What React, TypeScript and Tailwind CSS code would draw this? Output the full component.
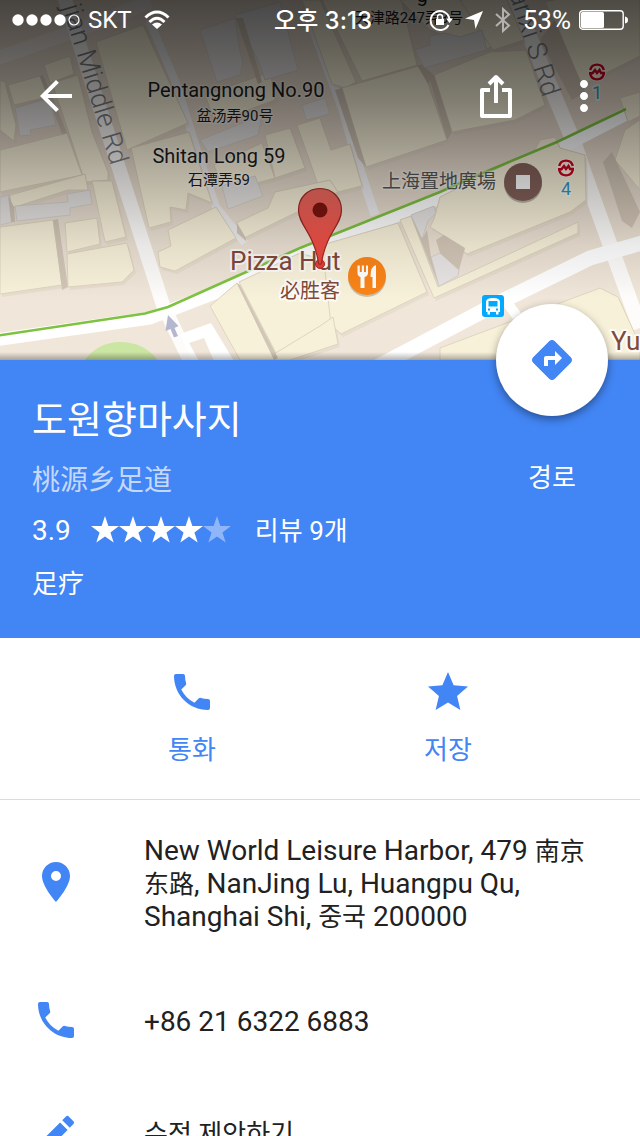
import { MdArrowBack, MdDirections, MdEdit, MdMoreVert, MdPhone, MdPlace, MdStar } from "react-icons/md";

const cream = [
  "0,80 5,82 16,125 14,141 0,130",
  "8,85 40,76 48,97 14,105",
  "44,65 70,56 74,74 50,83",
  "52,83 78,75 92,132 108,172 108,180 85,182 68,130",
  "0,150 67,133 82,175 0,192",
  "96,42 143,25 188,123 127,150",
  "205,95 270,72 275,100 215,122",
  "214,165 262,143 275,178 224,192",
  "265,135 290,128 305,168 275,178",
  "297,125 320,118 331,150 350,144 362,186 322,196",
  "302,0 320,0 356,82 345,88 332,84",
  "322,0 400,-5 417,65 362,81",
  "342,88 422,65 447,140 366,167",
  "434,75 490,52 526,50 545,105 515,120 452,132",
  "400,0 480,-5 492,46 485,50 430,30",
  "460,0 505,-5 524,40 493,50",
  "545,2 640,-20 640,56 582,85",
  "640,92 620,98 628,122 640,116",
  "640,120 625,130 615,160 640,190",
  "0,227 53,220 62,285 0,294",
  "65,223 97,218 100,244 67,252",
  "67,254 127,243 134,270 122,282 68,287",
  "92,181 112,181 126,237 105,242",
  "0,198 85,174 88,190 68,190 15,207 0,205",
  "131,148 189,132 212,203 188,193 186,210 170,207 171,222 149,228",
  "168,230 216,207 236,238 175,271 160,267 158,252 171,246",
  "210,306 237,283 275,360 240,360",
  "239,282 300,253 330,262 332,322 276,353",
  "236,223 268,208 275,192 330,180 338,192 244,238",
  "322,245 398,223 427,292 341,334 331,325",
  "400,220 411,216 438,287 578,222 578,233 434,298",
  "434,219 440,197 535,150 540,140 555,137 560,148 585,155 586,200 570,212 467,254 443,235 430,227",
  "440,348 600,288 618,297 640,345 640,360 440,360",
  "320,326 333,317 338,344 290,360 275,360 274,354",
];
const grey = [
  "15,108 50,98 56,125 30,130 31,135 20,136",
  "200,30 235,18 239,47 243,62 240,75 217,82",
  "235,15 280,2 298,70 265,80 258,60",
  "200,140 262,115 258,135 208,152",
  "415,50 430,45 430,36 445,33 460,37 482,30 487,50 424,68",
  "0,197 10,195 12,222 0,225",
  "15,206 68,202 67,194 90,190 92,204 70,208 70,215 17,221",
  "222,186 255,176 263,196 228,209",
  "302,105 325,98 330,114 306,120",
  "411,215 434,206 436,213 428,221 422,239",
  "431,257 440,253 459,270 458,276 439,286",
];
const shade = [
  "40,76 43,75 52,96 67,133 62,134 48,97",
  "342,88 335,90 358,158 366,167",
  "417,65 422,65 434,75 428,84",
  "447,140 452,132 434,75 430,80",
  "53,220 58,219 68,287 62,290",
  "8,195 14,207 15,222 11,222",
  "237,223 246,238 246,241 237,233",
  "237,283 240,285 278,358 274,360",
  "444,235 465,248 459,270 440,253 436,240",
  "411,216 422,239 427,230 431,257 439,286",
  "540,40 555,20 585,92 572,100",
  "603,162 612,152 640,212 632,228 622,221",
  "236,18 243,18 262,82 258,84",
];

const line = "M-5 336 L145 313.500 L168 307 L235 277 L300 248 L440 192 L490 170 L557 142 L626 109";

function Metro({ x, y, n }: { x: number; y: number; n: string }) {
  return (
    <g transform={`translate(${x} ${y})`}>
      <circle r="9.500" fill="#fff" opacity=".5" />
      <g fill="none" stroke="#d0021b" strokeWidth="2.400">
        <path d="M-6.800 -2A7 7 0 0 1 6.800 -2" />
        <path d="M-6.800 2A7 7 0 0 0 6.800 2V1H4L2.500 -2L0 1L-2 -2L-4.500 1.200H-8" />
      </g>
      <text y="27" textAnchor="middle" fontSize="18" fill="#2f9ac4" stroke="#fff" strokeOpacity=".5" strokeWidth="3" paintOrder="stroke">{n}</text>
    </g>
  );
}

function MapView() {
  return (
    <svg viewBox="0 0 640 360" preserveAspectRatio="xMidYMid slice" className="absolute inset-0 size-full font-['Roboto','Noto_Sans_CJK_SC',sans-serif]" role="img" aria-label="지도">
      <defs>
        <linearGradient id="scrim" x1="0" y1="0" x2="0" y2="1">
          <stop offset="0" stopColor="#000" stopOpacity=".69" />
          <stop offset=".14" stopColor="#000" stopOpacity=".59" />
          <stop offset=".28" stopColor="#000" stopOpacity=".48" />
          <stop offset=".5" stopColor="#000" stopOpacity=".25" />
          <stop offset=".68" stopColor="#000" stopOpacity=".08" />
          <stop offset=".83" stopColor="#000" stopOpacity="0" />
        </linearGradient>
        <linearGradient id="ground" x1="0" y1="0" x2="0" y2="1">
          <stop offset=".4" stopColor="#e6d9cb" />
          <stop offset=".85" stopColor="#f0e7da" />
        </linearGradient>
        <linearGradient id="edge" x1="0" y1="0" x2="0" y2="1">
          <stop offset="0" stopColor="#000" stopOpacity="0" />
          <stop offset="1" stopColor="#000" stopOpacity=".3" />
        </linearGradient>
        <linearGradient id="pin" x1="0" y1="0" x2="0" y2="1">
          <stop offset="0" stopColor="#ee6b62" />
          <stop offset="1" stopColor="#ee4339" />
        </linearGradient>
      </defs>
      <rect width="640" height="360" fill="url(#ground)" />
      <path d="M84 361Q98 342 120 342Q145 342 158 361Z" fill="#cbe6a3" />
      <g fill="none" stroke="#f0f0f4" strokeLinejoin="round">
        <path d="M-5 59L75 31L150 2" strokeWidth="14" opacity=".5" />
        <path d="M149 20L176 83L196 147L216 207L245 243" strokeWidth="8" opacity=".8" />
        <path d="M306 10L343 110L359 167L375 215" strokeWidth="9" opacity=".85" />
      </g>
      <g fill="none" stroke="#fff" strokeLinejoin="round">
        <path d="M62 -10L118 165L163 305L192 365" strokeWidth="14" opacity=".85" />
        <path d="M510 -10L575 145L585 175L640 328" strokeWidth="15" opacity=".85" />
        <path d="M-5 340L150 318L238 284L310 251L440 198L560 148L630 112" strokeWidth="13" />
        <path d="M375 368L500 302L590 258L645 242" strokeWidth="15" />
        <path d="M505 300L517 316" strokeWidth="10" />
      </g>
      <path d="M180 334L211 323L234 361H192ZM189 343L199 361H214L204 338Z" fill="#fff" fillRule="evenodd" />
      <g fill="#dccfbf">
        {cream.map((p) => <polygon key={p} points={p} transform="translate(2 3)" opacity=".4" />)}
      </g>
      <g fill="#f8f1da" stroke="#dfd5bf" strokeWidth="1">
        {cream.map((p) => <polygon key={p} points={p} />)}
      </g>
      <g fill="#e7e4e3" stroke="#d8d2cd" strokeWidth="1">
        {grey.map((p) => <polygon key={p} points={p} />)}
      </g>
      <g fill="#d2c6b6">
        {shade.map((p) => <polygon key={p} points={p} />)}
      </g>
      <path d={line} fill="none" stroke="#7fc241" strokeWidth="2.500" />
      <path d="M168 315L178.500 326L174.500 328L178 336L174 337.500L170.500 329L165.500 331Z" fill="#b4b8cf" />

      <g fill="#7b7e86" fontSize="27" fontWeight="300">
        <text transform="translate(111 166) rotate(73)" textAnchor="end">jian Middle Rd</text>
        <text transform="translate(543 98) rotate(72)" textAnchor="end">anxi S Rd</text>
      </g>
      <g fill="#1c1c1c" stroke="#fff" strokeOpacity=".35" strokeWidth="3" paintOrder="stroke" strokeLinejoin="round" textAnchor="middle">
        <text x="236" y="97" fontSize="20">Pentangnong No.90</text>
        <text x="235" y="121" fontSize="15">盆汤弄90号</text>
        <text x="219" y="163" fontSize="20">Shitan Long 59</text>
        <text x="219" y="185" fontSize="15">石潭弄59</text>
        <text x="409" y="23" fontSize="15">天津路247弄3号</text>
        <text x="422" y="2" fontSize="20">g</text>
        <text x="439" y="188" fontSize="19" fill="#565656">上海置地廣場</text>
      </g>
      <g fill="#81493a" stroke="#fff" strokeOpacity=".8" strokeWidth="4" paintOrder="stroke" strokeLinejoin="round">
        <text x="230" y="270" fontSize="26">Pizza Hut</text>
        <text x="280" y="298" fontSize="20">必胜客</text>
        <text x="611" y="350" fontSize="26">Yu</text>
      </g>
      <circle cx="523" cy="184" r="19" fill="#000" opacity=".25" />
      <circle cx="523" cy="182" r="19" fill="#84615a" />
      <rect x="516" y="175" width="14" height="14" fill="#fff" />
      <circle cx="367" cy="278" r="19" fill="#000" opacity=".2" />
      <circle cx="367" cy="276" r="19" fill="#fa8418" />
      <path d="M357.500 265.500V273Q357.500 276 360.500 277V288H364.500V277Q368 276 368 273V265.500H366V272H364V265.500H361.800V272H359.800V265.500ZM376 265Q370.500 266 370.500 277H372.500V288H376Z" fill="#fff" />
      <g transform="translate(482 295)">
        <rect width="22" height="22" rx="3" fill="#03a9ff" />
        <path d="M4 7Q4 3 11 3Q18 3 18 7V17H16.500V19.500H14V17H8V19.500H5.500V17H4ZM6.500 6V11.500H15.500V6ZM6 13.500V15.500H8V13.500ZM14 13.500V15.500H16V13.500Z" fill="#fff" fillRule="evenodd" />
      </g>
      <Metro x={597} y={72} n="1" />
      <Metro x={566} y={168} n="4" />
      <circle cx="320" cy="264" r="4.500" fill="#e3413a" stroke="#b32a25" />
      <path d="M320 188.500C307.500 188.500 298.500 198 298.500 210C298.500 225 314 233 318.500 263Q320 266 321.500 263C326 233 341.500 225 341.500 210C341.500 198 332.500 188.500 320 188.500Z" fill="url(#pin)" stroke="#9f2a25" strokeWidth="1.200" />
      <circle cx="320" cy="210" r="7.500" fill="#7b150f" />
      <rect width="640" height="360" fill="url(#scrim)" />
      <rect y="352" width="640" height="8" fill="url(#edge)" />
    </svg>
  );
}

function StatusBar() {
  return (
    <div className="relative grid h-10 grid-cols-[1fr_auto_1fr] items-center px-3 font-['Inter','Noto_Sans_CJK_KR',sans-serif] text-2xl text-white">
      <div className="flex items-center gap-2">
        <svg viewBox="0 0 68 12" className="h-3 w-[68px]" fill="#fff" aria-hidden="true">
          <circle cx="6" cy="6" r="5.700" />
          <circle cx="20" cy="6" r="5.700" />
          <circle cx="34" cy="6" r="5.700" />
          <circle cx="48" cy="6" r="5.700" />
          <circle cx="62" cy="6" r="5" fill="none" stroke="#fff" strokeWidth="1.200" />
        </svg>
        <span className="font-['Roboto']">SKT</span>
        <svg viewBox="0 0 26 20" className="ml-1 h-5 w-[26px]" fill="none" stroke="#fff" strokeWidth="3" aria-hidden="true">
          <path d="M1.500 7.500Q13 -3.500 24.500 7.500M5.500 12Q13 4.500 20.500 12" />
          <path d="M13 19L8 14.500Q13 10.500 18 14.500Z" fill="#fff" stroke="none" />
        </svg>
      </div>
      <span className="pt-0.5 pl-1.5 font-medium">오후 3:13</span>
      <div className="flex items-center justify-end">
        <svg viewBox="0 0 24 24" className="size-6" fill="none" stroke="#fff" strokeWidth="2" aria-hidden="true">
          <path d="M19.500 17A9.500 9.500 0 1 1 20.500 11" />
          <path d="M17 10.500H24L20.500 15Z" fill="#fff" stroke="none" />
          <rect x="7" y="11" width="8" height="6" fill="#fff" stroke="none" />
          <path d="M8.500 11V9Q8.500 6.500 11 6.500Q13.500 6.500 13.500 9V11" strokeWidth="1.500" />
        </svg>
        <svg viewBox="0 0 18 18" className="ml-3 size-[18px]" fill="#fff" aria-hidden="true">
          <path d="M18 0L10.500 18L9 9L0 7.500Z" />
        </svg>
        <svg viewBox="0 0 16 26" className="ml-3 h-[26px] w-4" fill="none" stroke="#fff" strokeOpacity=".55" strokeWidth="2" aria-hidden="true">
          <path d="M1 7L14 18.500L8 24V2L14 7.500L1 19" />
        </svg>
        <span className="ml-3 font-['Roboto'] text-[26px]">53%</span>
        <svg viewBox="0 0 49 20" className="ml-2 h-5 w-[49px]" aria-hidden="true">
          <rect x=".700" y=".700" width="43.500" height="18.500" rx="3" fill="none" stroke="#fff" strokeWidth="1.400" />
          <rect x="2" y="2" width="23" height="16" rx="1.500" fill="#fff" />
          <path d="M46 6.500Q49 7 49 10Q49 13 46 13.500Z" fill="#fff" />
        </svg>
      </div>
    </div>
  );
}

const RATING = [1, 2, 3, 4, 5];

export default function App() {
  return (
    <main className="h-screen overflow-y-auto bg-white font-['Roboto','Noto_Sans_CJK_KR',sans-serif] text-[#212121] [scrollbar-width:none]">
      <header className="relative h-[360px] overflow-hidden">
        <MapView />
        <StatusBar />
        <nav className="relative flex h-28 items-center px-8">
          <button type="button" aria-label="뒤로" className="text-white">
            <MdArrowBack className="size-12" />
          </button>
          <button type="button" aria-label="공유" className="ml-auto text-white">
            <svg viewBox="0 0 32 44" className="h-11 w-8" fill="none" stroke="currentColor" strokeWidth="4" strokeLinejoin="round">
              <path d="M10 16H2V42H30V16H22M16 29V4M9 10L16 3L23 10" />
            </svg>
          </button>
          <button type="button" aria-label="더보기" className="ml-12 text-white">
            <MdMoreVert className="size-12" />
          </button>
        </nav>
      </header>

      <section className="flex justify-between bg-[#4285f4] px-8 pt-8 pb-8 text-white">
        <div>
          <h1 className="text-[38px] leading-[56px]">도원향마사지</h1>
          <p className="mt-1.5 font-['Noto_Sans_CJK_JP',sans-serif] text-[28px] leading-[48px] text-white/70">桃源乡足道</p>
          <div className="flex h-14 items-center text-[28px]">
            <span className="pt-0.5">3.9</span>
            <span className="ml-5 flex" role="img" aria-label="별점 3.9">
              {RATING.map((n) => (
                <svg key={n} viewBox="2 2 20 20" className={n <= 4 ? "size-7" : "size-7 opacity-40"} fill="currentColor">
                  <path d="M12 2l2.400 7.200H22l-6.100 4.500L18.200 21 12 16.600 5.800 21l2.300-7.300L2 9.200h7.600z" />
                </svg>
              ))}
            </span>
            <span className="ml-6 pt-0.5 text-[26px]">리뷰 9개</span>
          </div>
          <p className="font-['Noto_Sans_CJK_SC',sans-serif] text-[26px] leading-[48px]">足疗</p>
        </div>
        <button type="button" className="relative -mt-[88px] flex w-28 flex-col items-center self-start">
          <span className="flex size-28 items-center justify-center rounded-full bg-white text-[#4285f4] shadow-[0_3px_8px_rgba(0,0,0,0.4)]">
            <MdDirections className="size-12" />
          </span>
          <span className="mt-[42px] text-[26px] leading-10">경로</span>
        </button>
      </section>

      <div className="grid h-[162px] grid-cols-2 border-b border-[#dcdcdc] px-16 text-[26px] text-[#4285f4]">
        <button type="button" className="flex flex-col items-center pt-[30px]">
          <MdPhone className="size-12" />
          <span className="mt-3.5 leading-10">통화</span>
        </button>
        <button type="button" className="flex flex-col items-center pt-[30px]">
          <MdStar className="size-12" />
          <span className="mt-3.5 leading-10">저장</span>
        </button>
      </div>

      <ul className="text-[28px] leading-[33px]">
        <li className="flex min-h-[164px] items-center pr-12 pl-8">
          <MdPlace className="size-12 shrink-0 text-[#4285f4]" />
          <p className="ml-16 pt-0.5">
            New World Leisure Harbor, 479 <span className="font-['Noto_Sans_CJK_SC'] text-[25px] leading-none">南京东路</span>, NanJing Lu, Huangpu Qu, Shanghai Shi, <span className="text-[26px] leading-none">중국</span> 200000
          </p>
        </li>
        <li className="flex min-h-28 items-center pr-12 pl-8">
          <MdPhone className="size-12 shrink-0 text-[#4285f4]" />
          <a href="tel:+862163226883" className="ml-16 pt-0.5">+86 21 6322 6883</a>
        </li>
        <li className="flex min-h-[116px] items-center pr-12 pl-8">
          <MdEdit className="size-12 shrink-0 text-[#4285f4]" />
          <button type="button" className="ml-16 text-[26px]">수정 제안하기</button>
        </li>
      </ul>
    </main>
  );
}
